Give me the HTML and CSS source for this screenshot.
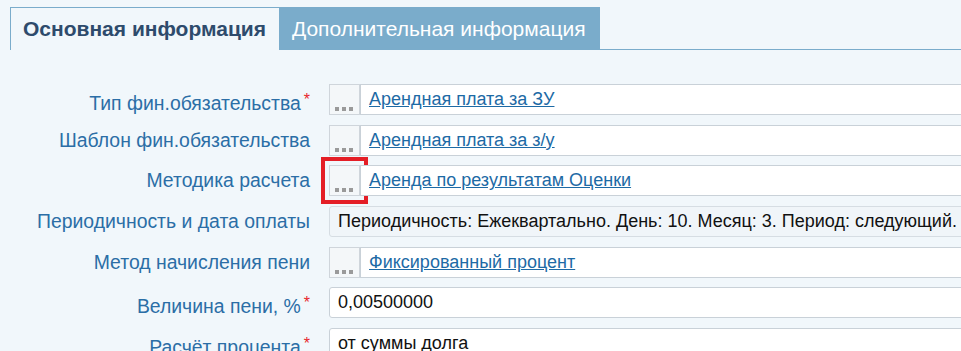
FILE: index.html
```html
<!DOCTYPE html>
<html lang="ru">
   <head>
      <meta charset="UTF-8">
      <title>Финансовое обязательство</title>
      <link rel="stylesheet" href="styles.css">
   </head>
   <body>
      <div class="tabs">
         <div class="tab active">Основная информация</div>
         <div class="tab">Дополнительная информация</div>
         <div class="tab-rest"></div>
      </div>
      <div class="form">
         <label class="lbl">Тип фин.обязательства<span class="req">*</span></label>
         <div class="field">
            <span class="pick"><svg width="19" height="4"><rect x="0" y="0" width="4" height="4"/><rect x="7" y="0" width="4" height="4"/><rect x="14" y="0" width="4" height="4"/></svg></span>
            <span class="value"><a href="#">Арендная плата за ЗУ</a></span>
         </div>

         <label class="lbl">Шаблон фин.обязательства</label>
         <div class="field">
            <span class="pick"><svg width="19" height="4"><rect x="0" y="0" width="4" height="4"/><rect x="7" y="0" width="4" height="4"/><rect x="14" y="0" width="4" height="4"/></svg></span>
            <span class="value"><a href="#">Арендная плата за з/у</a></span>
         </div>

         <label class="lbl">Методика расчета</label>
         <div class="field">
            <span class="pick marked"><svg width="19" height="4"><rect x="0" y="0" width="4" height="4"/><rect x="7" y="0" width="4" height="4"/><rect x="14" y="0" width="4" height="4"/></svg></span>
            <span class="value"><a href="#">Аренда по результатам Оценки</a></span>
         </div>

         <label class="lbl">Периодичность и дата оплаты</label>
         <div class="field">
            <span class="text readonly">Периодичность: Ежеквартально. День: 10. Месяц: 3. Период: следующий.</span>
         </div>

         <label class="lbl">Метод начисления пени</label>
         <div class="field">
            <span class="pick"><svg width="19" height="4"><rect x="0" y="0" width="4" height="4"/><rect x="7" y="0" width="4" height="4"/><rect x="14" y="0" width="4" height="4"/></svg></span>
            <span class="value"><a href="#">Фиксированный процент</a></span>
         </div>

         <label class="lbl">Величина пени, %<span class="req">*</span></label>
         <div class="field">
            <span class="text">0,00500000</span>
         </div>

         <label class="lbl">Расчёт процента<span class="req">*</span></label>
         <div class="field">
            <span class="text">от суммы долга</span>
         </div>
      </div>
   </body>
</html>
```

FILE: styles.css
```css
html, body{
margin: 0;
padding: 0;
background-color: #f1f7fb;
font-family: "Liberation Sans", Arial, sans-serif;
overflow: hidden;
}
.tabs{
display: flex;
padding: 7px 0 0 10px;
height: 43px;
}
.tab{
box-sizing: border-box;
height: 43px;
padding: 0 14px 0 13px;
font-size: 21px;
line-height: 43px;
color: #ffffff;
background-color: #7aaccb;
white-space: nowrap;
}
.tab.active{
color: #2e4b6c;
font-weight: bold;
background-color: #f1f7fb;
border-left: 1px solid #7aaccb;
border-top: 1px solid #7aaccb;
padding: 0 13px 0 12px;
line-height: 41px;
}
.tab-rest{
flex: 1;
border-bottom: 1px solid #7aaccb;
}
.form{
display: grid;
grid-template-columns: 310px 1000px;
column-gap: 19px;
row-gap: 9.7px;
margin-top: 34px;
}
.lbl{
height: 31px;
line-height: 31px;
text-align: right;
font-size: 19.4px;
color: #2b6ea6;
white-space: nowrap;
}
.req{
color: #e8262c;
font-size: 16px;
vertical-align: 5px;
margin-left: 3px;
}
.field{
display: flex;
height: 31px;
}
.pick{
box-sizing: border-box;
width: 31px;
height: 31px;
border: 1px solid #cfd5db;
background-color: #f4f7f9;
display: flex;
align-items: flex-end;
justify-content: center;
padding-bottom: 3px;
}
.pick svg{
fill: #9a9a9a;
display: block;
}
.pick.marked{
outline: 4px solid #e41e26;
outline-offset: 4px;
}
.value{
box-sizing: border-box;
flex: 1;
height: 31px;
border: 1px solid #c9d1d8;
background-color: #ffffff;
padding: 0 8px;
line-height: 29px;
font-size: 18px;
}
.value a{
color: #1d6aa5;
text-decoration: underline;
}
.text{
box-sizing: border-box;
flex: 1;
height: 31px;
border: 1px solid #c9d1d8;
border-radius: 3px;
background-color: #ffffff;
padding: 0 8px;
line-height: 29px;
font-size: 18px;
color: #111111;
white-space: nowrap;
}
.text.readonly{
background-color: #f0f5f9;
border-color: #d6dde3;
}
```
